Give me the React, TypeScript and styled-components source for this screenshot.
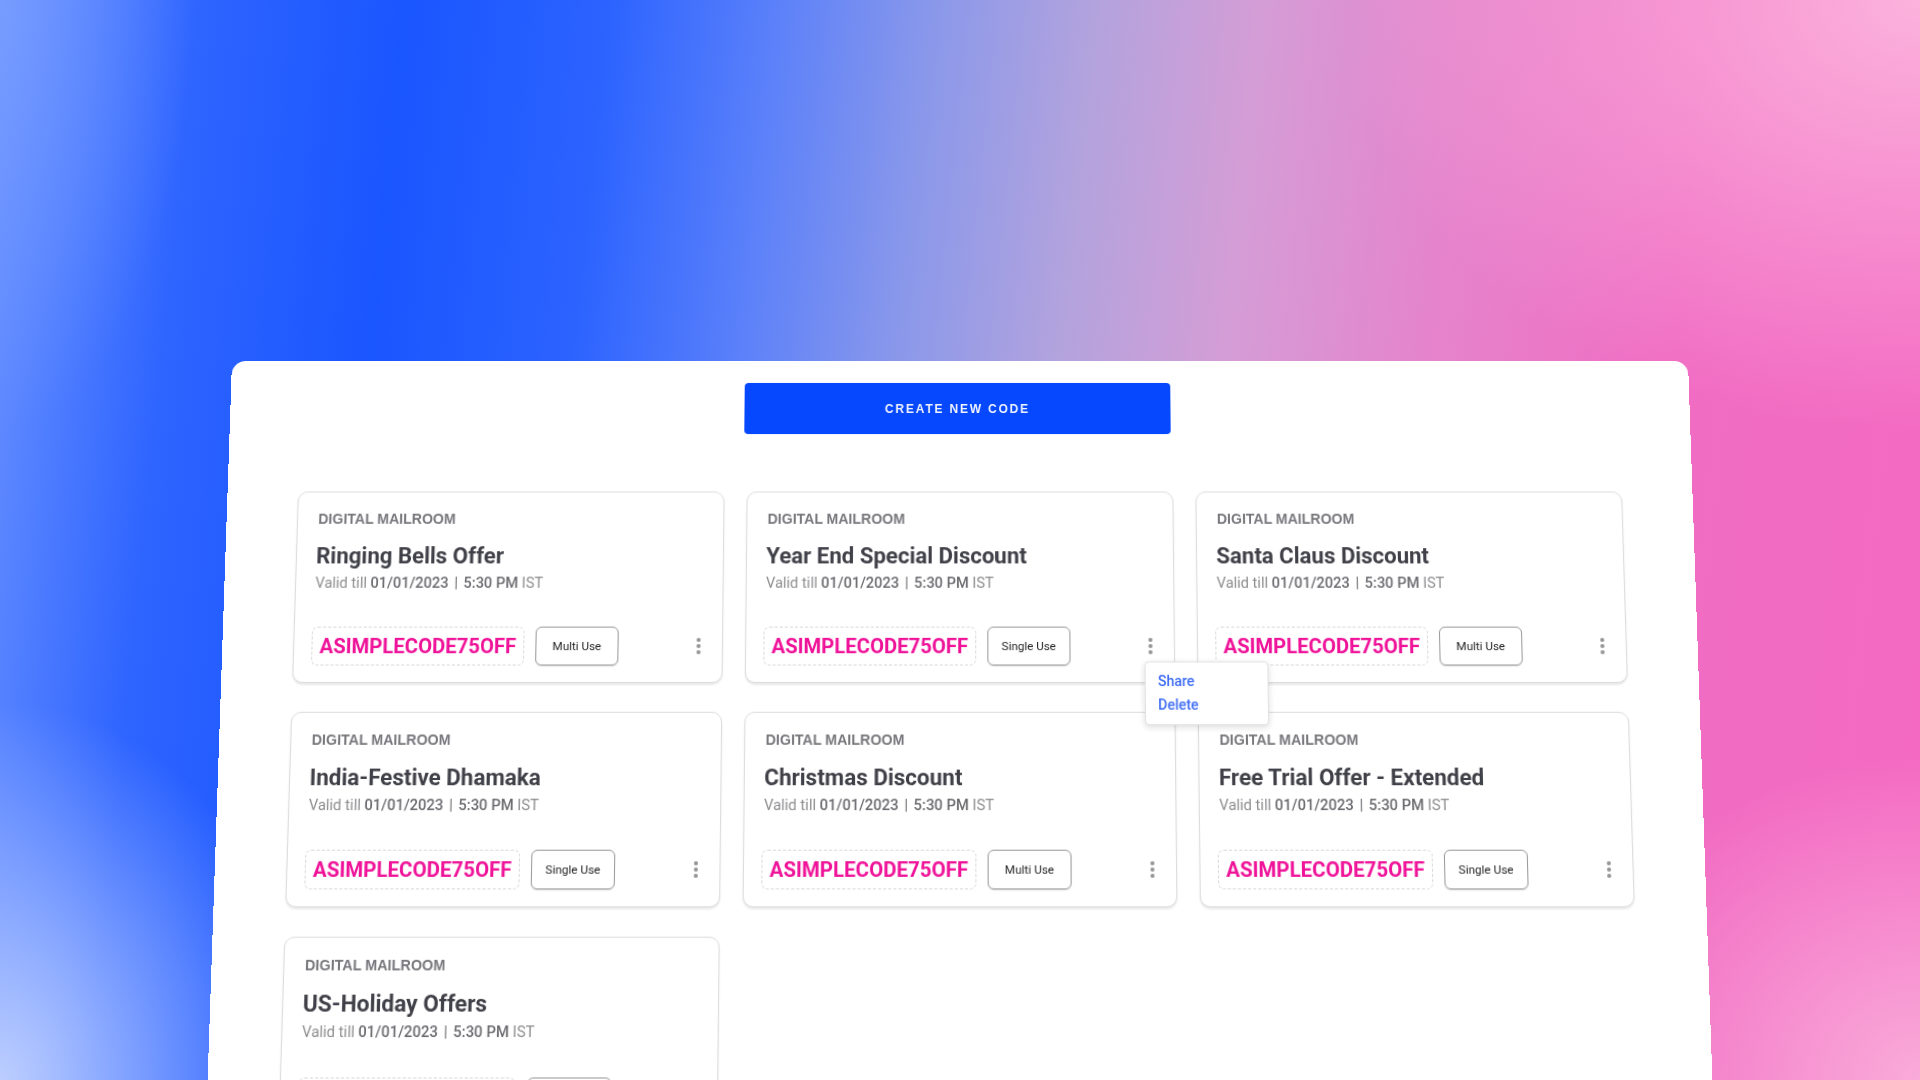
import React from "react";
import styled, { createGlobalStyle } from "styled-components";

const GlobalStyle = createGlobalStyle`
  html, body {
    margin: 0;
    padding: 0;
    height: 100%;
  }
  body {
    overflow: hidden;
    font-family: Roboto, "Liberation Sans", Arial, sans-serif;
  }
  * {
    box-sizing: border-box;
  }
`;

const Page = styled.div`
  width: 100%;
  height: 1080px;
  overflow: hidden;
  padding-top: 361px;
  background:
    radial-gradient(ellipse 10% 40% at 0% 0%, rgba(130, 165, 255, 0.55), rgba(130, 165, 255, 0) 100%),
    radial-gradient(ellipse 30% 40% at 100% 0%, rgba(252, 182, 222, 0.95), rgba(252, 182, 222, 0) 100%),
    radial-gradient(ellipse 16% 35% at 0% 100%, rgba(188, 206, 255, 1), rgba(188, 206, 255, 0) 100%),
    radial-gradient(ellipse 18% 30% at 100% 100%, rgba(250, 178, 220, 0.9), rgba(250, 178, 220, 0) 100%),
    linear-gradient(
      96deg,
      #6a92ff 0%,
      #2e64ff 10%,
      #1a56ff 20%,
      #2c63ff 30%,
      #5a80fa 38%,
      #8a98ea 46%,
      #b3a3dd 54%,
      #d49dd6 62%,
      #e584cc 72%,
      #f06cc3 84%,
      #f46ac2 100%
    );
`;

const Panel = styled.section`
  width: 1456px;
  margin: 0 auto;
  padding: 22px 70px 120px;
  background: #ffffff;
  border-radius: 14px 14px 0 0;
  transform-origin: 50% 0;
  transform: perspective(1500px) rotateX(4deg);
`;

const Toolbar = styled.div`
  display: flex;
  justify-content: center;
  padding-right: 5px;
`;

const CreateButton = styled.button`
  width: 425px;
  height: 51px;
  border: none;
  border-radius: 4px;
  background: #0648fe;
  color: #eef2ff;
  font-family: "Liberation Sans", Arial, sans-serif;
  font-weight: 700;
  font-size: 12px;
  letter-spacing: 1.8px;
  cursor: pointer;
`;

const Grid = styled.div`
  margin-top: 57px;
  display: grid;
  grid-template-columns: repeat(3, 1fr);
  column-gap: 22px;
  row-gap: 28px;
`;

const Card = styled.article`
  position: relative;
  height: 188px;
  display: flex;
  flex-direction: column;
  padding: 18px 20px 16px;
  background: #fff;
  border: 1.5px solid #dddddd;
  border-radius: 10px;
  box-shadow: 0 2px 2px rgba(0, 0, 0, 0.09);
`;

const Label = styled.div`
  font-family: "Liberation Sans", Arial, sans-serif;
  font-weight: 700;
  font-size: 14px;
  line-height: 16px;
  color: #77777c;
`;

const Title = styled.h3`
  margin: 16px 0 0 -1px;
  font-family: Roboto, sans-serif;
  font-weight: 700;
  font-size: 22px;
  line-height: 26px;
  color: #404048;
`;

const Validity = styled.div`
  margin: 5px 0 0 -1px;
  font-family: Roboto, sans-serif;
  font-size: 14.5px;
  line-height: 18px;
  color: #8d8d90;
  white-space: pre;
`;

const Strong = styled.span`
  font-weight: 500;
  color: #6b6b70;
`;

const Separator = styled.span`
  margin: 0 2px;
  color: #6b6b70;
`;

const CodeRow = styled.div`
  margin-top: auto;
  display: flex;
  align-items: center;
  gap: 11px;
`;

const CodeBox = styled.div`
  height: 38px;
  margin-left: -3px;
  padding: 0 7px;
  display: flex;
  align-items: center;
  border: 1px dashed #d8d8d8;
  border-radius: 6px;
  font-family: Roboto, sans-serif;
  font-weight: 700;
  font-size: 20px;
  color: #ef1399;
`;

const UseTag = styled.div`
  width: 82px;
  height: 38px;
  display: flex;
  align-items: center;
  justify-content: center;
  border: 1.2px solid #9a9a9a;
  border-radius: 6px;
  box-shadow: 0 1px 1px rgba(0, 0, 0, 0.12);
  font-family: Roboto, sans-serif;
  font-size: 11.5px;
  color: #262626;
`;

const MenuAnchor = styled.div`
  position: relative;
  margin-left: auto;
  margin-right: -1px;
  width: 8px;
  height: 20px;
`;

const Kebab = styled.button`
  width: 8px;
  height: 20px;
  padding: 0;
  border: none;
  background: transparent;
  display: flex;
  flex-direction: column;
  align-items: center;
  justify-content: center;
  gap: 2px;
  cursor: pointer;
`;

const Dot = styled.span`
  width: 4px;
  height: 4px;
  border-radius: 50%;
  background: #959595;
`;

const Menu = styled.ul`
  position: absolute;
  z-index: 10;
  top: 25px;
  left: -2px;
  width: 122px;
  margin: 0;
  padding: 7px 12px;
  list-style: none;
  background: #fff;
  border: 1px solid #e2e2e2;
  border-radius: 4px;
  box-shadow: 0 2px 6px rgba(0, 0, 0, 0.14);
`;

const MenuItem = styled.li`
  font-family: Roboto, sans-serif;
  font-weight: 500;
  font-size: 14px;
  line-height: 23px;
  color: #3f6cf4;
  cursor: pointer;
`;

type Offer = {
  title: string;
  use: "Multi Use" | "Single Use";
  menuOpen?: boolean;
};

const offers: Offer[] = [
  { title: "Ringing Bells Offer", use: "Multi Use" },
  { title: "Year End Special Discount", use: "Single Use", menuOpen: true },
  { title: "Santa Claus Discount", use: "Multi Use" },
  { title: "India-Festive Dhamaka", use: "Single Use" },
  { title: "Christmas Discount", use: "Multi Use" },
  { title: "Free Trial Offer - Extended", use: "Single Use" },
  { title: "US-Holiday Offers", use: "Single Use" },
];

function OfferCard({ offer }: { offer: Offer }) {
  return (
    <Card>
      <Label>DIGITAL MAILROOM</Label>
      <Title>{offer.title}</Title>
      <Validity>
        Valid till <Strong>01/01/2023</Strong> <Separator>|</Separator>{" "}
        <Strong>5:30 PM</Strong> IST
      </Validity>
      <CodeRow>
        <CodeBox>ASIMPLECODE75OFF</CodeBox>
        <UseTag>{offer.use}</UseTag>
        <MenuAnchor>
          <Kebab aria-label="More actions">
            <Dot />
            <Dot />
            <Dot />
          </Kebab>
          {offer.menuOpen && (
            <Menu>
              <MenuItem>Share</MenuItem>
              <MenuItem>Delete</MenuItem>
            </Menu>
          )}
        </MenuAnchor>
      </CodeRow>
    </Card>
  );
}

export default function App() {
  return (
    <>
      <GlobalStyle />
      <Page>
        <Panel>
          <Toolbar>
            <CreateButton>CREATE NEW CODE</CreateButton>
          </Toolbar>
          <Grid>
            {offers.map((o) => (
              <OfferCard key={o.title} offer={o} />
            ))}
          </Grid>
        </Panel>
      </Page>
    </>
  );
}
